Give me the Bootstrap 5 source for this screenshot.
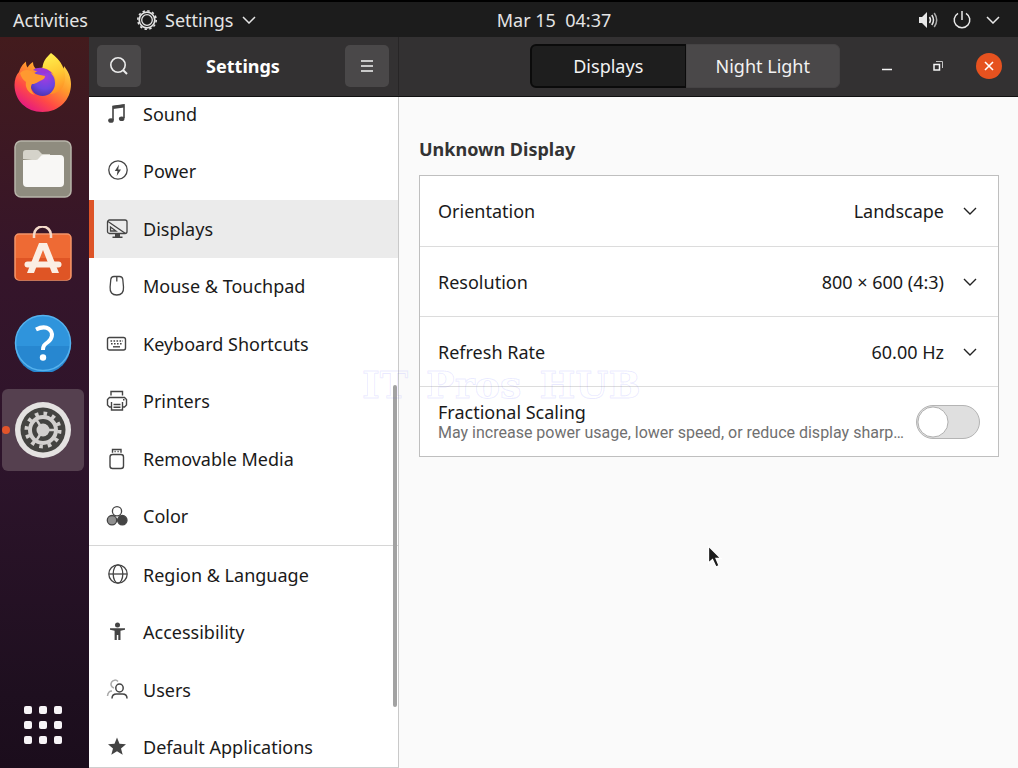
<!DOCTYPE html>
<html lang="en">
<head>
<meta charset="utf-8">
<meta name="viewport" content="width=device-width, initial-scale=1">
<title>Settings</title>
<link rel="stylesheet" href="https://cdn.jsdelivr.net/npm/bootstrap@5.3.0/dist/css/bootstrap.min.css">
<style>
  body { font: 400 18px/24px "Noto Sans", "Open Sans", sans-serif; color: #1a1a1a; background: #fafafa; overflow: hidden; }
  button { font: inherit; color: inherit; }
  svg { display: block; flex: none; }

  .topbar { background: #1c1c1c; color: #e4e4e4; border-top: 2px solid #000; height: 37px; }
  .topbar button { background: none; border: 0; padding: 0; }
  .topbar-start { flex: 1 0 90px; gap: 49px; padding-left: 13px; }
  .topbar-end { flex: 1 0 0px; }
  .topbar-end button { gap: 14px; margin-right: 18px; }

  .dock { width: 89px; padding: 4px 5px 23px 2px; background: linear-gradient(#431b1d 0, #35152a 32%, #2d142b 58%, #1e0f1f 90%, #1b0d1c); }
  .dock-app { position: relative; width: 82px; height: 82px; border: 0; border-radius: 6px; background: none; }
  .dock-app.running { background: #55404f; }
  .dock-app.running::before { content: ""; position: absolute; left: 0; top: 37px; width: 8px; height: 8px; border-radius: 50%; background: #e2542a; }

  .headerbar { background: #333132; color: #f2f2f2; height: 60px; padding-bottom: 1px; border-bottom: 1px solid #111; }
  .head-side { width: 310px; padding: 0 9px 0 8px; border-right: 1px solid #272526; }
  .head-title { font-size: 18px; font-weight: 700; line-height: 24px; margin: 0; color: #fff; }
  .tool { width: 44px; height: 42px; border: 0; border-radius: 5px; background: #4a4849; }
  .tabs { flex: 0 1 310px; height: 44px; margin-right: 34px; }
  .tabs button { flex: 1 1 0; border: 1px solid #454344; background: #4a4849; border-radius: 0 6px 6px 0; }
  .tabs button.active { background: #1e1e1e; border: 2px solid #0b0b0b; border-right-width: 1px; border-radius: 6px 0 0 6px; }
  .win-btn { width: 26px; height: 26px; border: 0; border-radius: 50%; background: none; }
  .win-btn.close-btn { background: #e6521f; }
  .win-btns { gap: 25px; padding-right: 16px; }

  .side { position: relative; width: 310px; background: #fff; border-right: 1px solid #c9c9c9; border-bottom: 1px solid #cfcfcf; overflow: hidden; }
  .side-list { margin: -12px 0 -9px; }
  .side-list a { flex: 1 1 0; gap: 15px; padding-left: 17px; color: #1a1a1a; text-decoration: none; min-height: 32px; }
  .side-list a.active { background: #ebebeb; box-shadow: inset 5px 0 #dd5428; }
  .side-list svg { width: 22px; height: 22px; }
  .side-rule { border-top: 1px solid #d6d6d6; }
  .side-thumb { position: absolute; right: 1px; top: 43%; bottom: 9%; width: 4px; border-radius: 2px; background: #a2a2a2; }

  .content { padding: 39px 19px 0 20px; background: #fafafa; }
  .content h2 { font-size: 18px; font-weight: 700; line-height: 26px; color: #333; margin: 0 0 13px; }
  .prefs { background: #fff; border: 1px solid #bfbfbf; }
  .pref { min-height: 70px; padding: 0 18px; }
  .pref > label { line-height: 22px; }
  .pref + .pref { border-top: 1px solid #dcdcdc; }
  .pref .form-select { font: inherit; color: #1a1a1a; width: 200px; height: 40px; border: 0; padding: 0 36px 0 0; text-align: right; text-align-last: right;
    background: #fff url("data:image/svg+xml,%3Csvg xmlns='http://www.w3.org/2000/svg' width='14' height='8' viewBox='0 0 14 8'%3E%3Cpath d='M1 1l6 6 6-6' fill='none' stroke='%23222' stroke-width='1.4'/%3E%3C/svg%3E") no-repeat right 3px center / 14px 8px; }
  .pref-note { font-family: Roboto, sans-serif; font-size: 16px; line-height: 20px; color: #707070; }
  .pref .form-switch { padding: 0; min-height: 34px; }
  .pref .form-check-input { float: none; margin: 0; width: 64px; height: 34px; border: 1px solid #b4b4b4; border-radius: 17px;
    background: #dfdfdf url("data:image/svg+xml,%3Csvg xmlns='http://www.w3.org/2000/svg' viewBox='0 0 34 34'%3E%3Ccircle cx='17' cy='17' r='16' fill='%23fff' stroke='%23aaa' stroke-width='1'/%3E%3C/svg%3E") no-repeat left center / 32px 32px; }

  .watermark { position: absolute; left: 362px; top: 370px; gap: 18px; font: 700 38px/30px "DejaVu Serif", serif; color: transparent; -webkit-text-stroke: 1px rgba(90, 90, 255, .12); pointer-events: none; }
  .pointer { position: absolute; left: 706px; top: 544px; pointer-events: none; }
</style>
</head>
<body class="d-flex flex-column vh-100">

<header class="topbar d-flex align-items-center flex-shrink-0">
  <div class="topbar-start d-flex align-items-center">
    <button type="button">Activities</button>
    <button type="button" class="d-flex align-items-center gap-2">
      <svg width="20" height="20" viewBox="0 0 20 20" fill="none" stroke="#e4e4e4"><circle cx="10" cy="10" r="7.800" stroke-width="1.700"/><circle cx="10" cy="10" r="5.300" stroke-width="1.300"/><circle cx="10" cy="10" r="9.200" stroke-width="1.600" stroke-dasharray="2.400 2.417"/></svg>
      <span>Settings</span>
      <svg width="14" height="8" viewBox="0 0 14 8" fill="none" stroke="#e4e4e4" stroke-width="1.500"><path d="M1 1l6 6 6-6"/></svg>
    </button>
  </div>
  <button type="button">Mar 15&nbsp; 04:37</button>
  <div class="topbar-end d-flex justify-content-end">
    <button type="button" class="d-flex align-items-center" aria-label="System menu">
      <svg width="20" height="20" viewBox="0 0 20 20" fill="none" stroke="#e8e8e8" stroke-width="1.500"><path d="M1 7h3l5-5v16l-5-5H1z" fill="#e8e8e8" stroke="none"/><path d="M11.500 7q2 3 0 6M13.800 5q3.400 5 0 10"/><path d="M16.200 3q5 7 0 14" stroke="#aaa"/></svg>
      <svg width="20" height="20" viewBox="0 0 20 20" fill="none" stroke="#e8e8e8" stroke-width="1.500"><path d="M6 3.300a7.800 7.800 0 1 0 8 0M10 1v9"/></svg>
      <svg width="14" height="8" viewBox="0 0 14 8" fill="none" stroke="#e8e8e8" stroke-width="1.500"><path d="M1 1l6 6 6-6"/></svg>
    </button>
  </div>
</header>

<div class="d-flex flex-fill" style="min-height:0">
  <nav class="dock d-flex flex-column flex-shrink-0 align-items-center" aria-label="Dock">
    <div class="d-flex flex-column" style="gap:5px">
      <button type="button" class="dock-app d-flex align-items-center justify-content-center p-0" aria-label="Firefox">
        <svg width="60" height="60" viewBox="0 0 60 60">
          <defs>
            <linearGradient id="fx1" x1=".85" y1=".1" x2=".25" y2="1"><stop offset="0" stop-color="#ffe14a"/><stop offset=".38" stop-color="#ff9a2c"/><stop offset=".7" stop-color="#ff4a45"/><stop offset="1" stop-color="#e31587"/></linearGradient>
            <radialGradient id="fx2" cx=".6" cy=".25" r=".8"><stop offset="0" stop-color="#a63ae0"/><stop offset=".6" stop-color="#6a45e0"/><stop offset="1" stop-color="#4a32a8"/></radialGradient>
            <linearGradient id="fx3" x1=".4" y1="0" x2=".6" y2="1"><stop offset="0" stop-color="#fff04e"/><stop offset=".5" stop-color="#ffc933"/><stop offset="1" stop-color="#ff8a25"/></linearGradient>
          </defs>
          <path d="M6 20C8 14 11 11 13 9.500c0 3 .5 4.500 1.500 6C16 13 18 11 20 10c0 3 1 5 3 7l9-2 6-13c7 5 10 10 12 15 1-1 1-2 1-3 4 5 7 11 7 18 0 16-12 28-28.500 28S1.500 48 1.500 33C1.500 28 3 23 6 20z" fill="url(#fx1)"/>
          <path d="M38 1c-5 5-8 8-8.500 15 6 0 12 5 13 11 1 7-2 12-6 15 8 0 14-5 15-12 3-12-4-22-13.500-29z" fill="url(#fx3)"/>
          <ellipse cx="29.500" cy="31" rx="12.500" ry="13" fill="url(#fx2)"/>
          <path d="M20 18c5-4 14-3 20 4-4-2-7-2-8 0z" fill="#9a35d8"/>
          <path d="M7 21c3-3 7-4 11-2l5 3 9 2c0 3-3 4-5 5-3 1-4 3-8 3-2 3-1 8 3 11-8-2-10-9-9-13-3-2-5-5-6-9z" fill="#ff9930"/>
        </svg>
      </button>
      <button type="button" class="dock-app d-flex align-items-center justify-content-center p-0" aria-label="Files">
        <svg width="58" height="58" viewBox="0 0 58 58"><rect x="1" y="1" width="56" height="56" rx="6" fill="#8f8c7f" stroke="#b8b5aa" stroke-width="1.500"/><path d="M9 19v-6a3 3 0 0 1 3-3h11q2 0 3 2l2 2h8v8z" fill="#d5d3ca"/><path d="M9 20h13q2 0 3-2l1-1q1-2 3-2h17a4 4 0 0 1 4 4v24a4 4 0 0 1-4 4H13a4 4 0 0 1-4-4z" fill="#f8f7f5"/></svg>
      </button>
      <button type="button" class="dock-app d-flex align-items-center justify-content-center p-0" aria-label="Software">
        <svg width="58" height="60" viewBox="0 0 58 60"><rect x="1" y="8" width="56" height="46" rx="4" fill="#ee6a34" stroke="#f49468" stroke-width="1.500"/><path d="M2 32h54v18a4 4 0 0 1-4 4H6a4 4 0 0 1-4-4z" fill="#df5525"/><path d="M20 12v-3a8.500 8.500 0 0 1 17 0v3" fill="none" stroke="#f3d9c9" stroke-width="2.500"/><path d="M13 47L25 17h8L45 47h-7L29 24l-9 23z" fill="#fbeee3"/><path d="M13.500 38.500h31" stroke="#fbeee3" stroke-width="6" stroke-linecap="round"/></svg>
      </button>
      <button type="button" class="dock-app d-flex align-items-center justify-content-center p-0" aria-label="Help">
        <svg width="58" height="58" viewBox="0 0 58 58"><circle cx="29" cy="29" r="27.500" fill="#2f94dc"/><path d="M1.500 32h55a27.500 27.500 0 0 1-55 0z" fill="#2787d0"/><circle cx="29" cy="29" r="27.500" fill="none" stroke="#55b2ee" stroke-width="1.500"/><path d="M22 15.500q8-4 13-.5c5 4 3 10-1 13-4 3-5 4-5 8" fill="none" stroke="#fff" stroke-width="4"/><circle cx="29" cy="43.500" r="3.200" fill="#fff"/></svg>
      </button>
      <button type="button" class="dock-app running d-flex align-items-center justify-content-center p-0" aria-label="Settings">
        <svg width="58" height="58" viewBox="0 0 58 58"><circle cx="29" cy="29" r="28" fill="#e4e2e1"/><circle cx="29" cy="29" r="22.500" fill="#444441"/><g fill="none" stroke="#d2d0ce"><circle cx="29" cy="29" r="13" stroke-width="4"/><circle cx="29" cy="29" r="16.500" stroke-width="4" stroke-dasharray="3.600 5.039"/><path d="M29 29h12M29 29l-7-11M29 29l-7 11" stroke-width="2.500"/></g><circle cx="29" cy="29" r="6.500" fill="#d2d0ce"/></svg>
      </button>
    </div>
    <button type="button" class="border-0 bg-transparent p-0 mt-auto" aria-label="Show Applications">
      <svg width="40" height="40" viewBox="0 0 40 40" fill="#f7f4f7"><rect x="1" y="1" width="8" height="8" rx="2"/><rect x="16" y="1" width="8" height="8" rx="2"/><rect x="31" y="1" width="8" height="8" rx="2"/><rect x="1" y="16" width="8" height="8" rx="2"/><rect x="16" y="16" width="8" height="8" rx="2"/><rect x="31" y="16" width="8" height="8" rx="2"/><rect x="1" y="31" width="8" height="8" rx="2"/><rect x="16" y="31" width="8" height="8" rx="2"/><rect x="31" y="31" width="8" height="8" rx="2"/></svg>
    </button>
  </nav>

  <div class="d-flex flex-column flex-fill" style="min-width:0">
    <div class="headerbar d-flex flex-shrink-0">
      <div class="head-side d-flex flex-shrink-0 align-items-center justify-content-between">
        <button type="button" class="tool d-flex align-items-center justify-content-center p-0" aria-label="Search">
          <svg width="20" height="20" viewBox="0 0 20 20" fill="none" stroke="#ececec" stroke-width="1.600"><circle cx="9" cy="9" r="7.200"/><path d="M14 14l4 4" stroke-width="2"/></svg>
        </button>
        <h1 class="head-title">Settings</h1>
        <button type="button" class="tool d-flex align-items-center justify-content-center p-0" aria-label="Menu">
          <svg width="14" height="14" viewBox="0 0 14 14" stroke="#f4f4f4" stroke-width="1.500"><path d="M1 2h12M1 7h12M1 12h12"/></svg>
        </button>
      </div>
      <div class="d-flex flex-fill align-items-center justify-content-end">
        <div class="tabs d-flex" role="tablist">
          <button type="button" role="tab" aria-selected="true" class="active p-0">Displays</button>
          <button type="button" role="tab" aria-selected="false" class="p-0">Night Light</button>
        </div>
        <div class="win-btns d-flex">
          <button type="button" class="win-btn d-flex align-items-center justify-content-center p-0" aria-label="Minimize"><svg width="12" height="12" viewBox="0 0 12 12" stroke="#f4f4f4" stroke-width="1.500"><path d="M1 9.500h10"/></svg></button>
          <button type="button" class="win-btn d-flex align-items-center justify-content-center p-0" aria-label="Restore"><svg width="12" height="12" viewBox="0 0 12 12" fill="none" stroke="#f4f4f4"><rect x="2" y="4.500" width="5.500" height="5.500" stroke-width="1.500"/><path d="M4 1.500h6.500V8" stroke="#c4c4c4"/></svg></button>
          <button type="button" class="win-btn close-btn d-flex align-items-center justify-content-center p-0" aria-label="Close"><svg width="12" height="12" viewBox="0 0 12 12" stroke="#fff" stroke-width="1.600"><path d="M2 2l8 8M10 2l-8 8"/></svg></button>
        </div>
      </div>
    </div>

    <div class="d-flex flex-fill" style="min-height:0">
      <aside class="side d-flex flex-column flex-shrink-0">
        <nav class="side-list d-flex flex-column flex-fill" aria-label="Settings panels">
          <a href="#" class="d-flex align-items-center"><svg viewBox="0 0 22 22" fill="none" stroke="#444"><path d="M7 17V3.500l11-1.500v13" stroke-width="1.600"/><path d="M7 4.500l11-1.500" stroke-width="3"/><ellipse cx="5" cy="17.500" rx="2.800" ry="2.300" fill="#444" stroke="none"/><ellipse cx="15.700" cy="15.800" rx="2.800" ry="2.300" fill="#444" stroke="none"/></svg>Sound</a>
          <a href="#" class="d-flex align-items-center"><svg viewBox="0 0 22 22" fill="none" stroke="#444"><circle cx="12" cy="10" r="9.200" stroke-width="1.300"/><path d="M13 4.500L8.800 11h2.700l-.8 5 4.300-6.500h-2.800z" fill="#444" stroke="none"/></svg>Power</a>
          <a href="#" class="d-flex align-items-center active" aria-current="page"><svg viewBox="0 0 22 22" fill="none" stroke="#444" stroke-width="1.300"><rect x="1.500" y="2" width="19.500" height="13.500" rx="2"/><path d="M2 3.500l17.500 12M4.500 9v4h5.500z"/><path d="M9 16h5v2.500h2.500V20h-10v-1.500H9z" fill="#444" stroke="none"/></svg>Displays</a>
          <a href="#" class="d-flex align-items-center"><svg viewBox="0 0 22 22" fill="none" stroke="#444" stroke-width="1.300"><path d="M8 1.500h5.500q3 0 3.300 3l.7 7.500q.5 8-6.700 8t-6.700-8l.7-7.500q.3-3 3.200-3zM10.800 2v4.500"/></svg>Mouse &amp; Touchpad</a>
          <a href="#" class="d-flex align-items-center"><svg viewBox="0 0 22 22" fill="none" stroke="#444" stroke-width="1.400"><rect x="1.500" y="4.500" width="18" height="12.500" rx="2"/><path d="M4.500 8h12.500M5 10.800h12" stroke-dasharray="1.600 1.400"/><path d="M7 13.800h7"/></svg>Keyboard Shortcuts</a>
          <a href="#" class="d-flex align-items-center"><svg viewBox="0 0 22 22" fill="none" stroke="#444" stroke-width="1.400"><path d="M5 5.500v-4h11.500v4M5 17H3.500l-2-2V9.500l2-2h15l2 2V15l-2 2H17M5.500 12v8h11v-8M7.500 14.500h7M7.500 17.300h7M17 9.800h1.500"/></svg>Printers</a>
          <a href="#" class="d-flex align-items-center"><svg viewBox="0 0 22 22" fill="none" stroke="#444" stroke-width="1.400"><rect x="4" y="6.500" width="13.500" height="14" rx="2.500"/><path d="M6.500 4.800V1.500h8.500v3.300"/><path d="M8.500 3.500h1.200M11.500 3.500h1.200"/></svg>Removable Media</a>
          <a href="#" class="d-flex align-items-center"><svg viewBox="0 0 22 22" stroke="#444" stroke-width="1.300"><circle cx="11" cy="6.200" r="4.600" fill="#fff"/><circle cx="6" cy="15.200" r="4.700" fill="#8f8f8f"/><circle cx="16.300" cy="15.200" r="4.700" fill="#444"/></svg>Color</a>
          <div class="side-rule"></div>
          <a href="#" class="d-flex align-items-center"><svg viewBox="0 0 22 22" fill="none" stroke="#444" stroke-width="1.300"><circle cx="12" cy="10" r="9.200"/><ellipse cx="12" cy="10" rx="4.800" ry="9.200"/><path d="M3 10h18"/></svg>Region &amp; Language</a>
          <a href="#" class="d-flex align-items-center"><svg viewBox="0 0 22 22" fill="#444"><circle cx="11.500" cy="4" r="2.500"/><path d="M4 7.200h15v1.600l-4.500 1V19h-2.200v-5h-1.500v5H8.600V9.800L4 8.800z"/></svg>Accessibility</a>
          <a href="#" class="d-flex align-items-center"><svg viewBox="0 0 22 22" fill="none" stroke="#444" stroke-width="1.500"><path d="M12 2.500a4 4 0 1 0-4 6.500M1.500 17q.5-5 4.500-5" stroke="#aaa"/><ellipse cx="13.500" cy="9" rx="3.700" ry="4"/><path d="M6 19.500q0-4.500 4.500-4.500h6q4.500 0 4.500 4.500"/></svg>Users</a>
          <a href="#" class="d-flex align-items-center"><svg viewBox="0 0 22 22" fill="#444"><path d="M11 1.500l2.500 6.300 6.500.4-5 4.200 1.700 6.400-5.700-3.600-5.700 3.600L7 12.400 2 8.200l6.500-.4z"/></svg>Default Applications</a>
        </nav>
        <div class="side-thumb"></div>
      </aside>

      <main class="content flex-fill" style="min-width:0">
        <h2>Unknown Display</h2>
        <div class="prefs">
          <div class="pref d-flex align-items-center justify-content-between"><label for="orientation">Orientation</label><select id="orientation" class="form-select"><option>Landscape</option></select></div>
          <div class="pref d-flex align-items-center justify-content-between"><label for="resolution">Resolution</label><select id="resolution" class="form-select"><option>800 × 600 (4:3)</option></select></div>
          <div class="pref d-flex align-items-center justify-content-between"><label for="refresh">Refresh Rate</label><select id="refresh" class="form-select"><option>60.00 Hz</option></select></div>
          <div class="pref d-flex align-items-center justify-content-between gap-2">
            <label for="scaling" style="min-width:0"><span class="d-block">Fractional Scaling</span><span class="pref-note d-block text-truncate">May increase power usage, lower speed, or reduce display sharp…</span></label>
            <div class="form-check form-switch m-0"><input class="form-check-input" type="checkbox" role="switch" id="scaling"></div>
          </div>
        </div>
      </main>
    </div>
  </div>
</div>

<div class="watermark d-flex"><span>IT</span><span>Pros</span><span>HUB</span></div>
<svg class="pointer" width="16" height="26" viewBox="0 0 16 26"><path d="M2.500 2v17l4-3.500 3.500 7.500 3-1.500-3-7h5z" fill="#1c1c1c" stroke="#fff" stroke-width="1.300"/></svg>

<script src="https://cdn.jsdelivr.net/npm/bootstrap@5.3.0/dist/js/bootstrap.bundle.min.js"></script>
</body>
</html>
